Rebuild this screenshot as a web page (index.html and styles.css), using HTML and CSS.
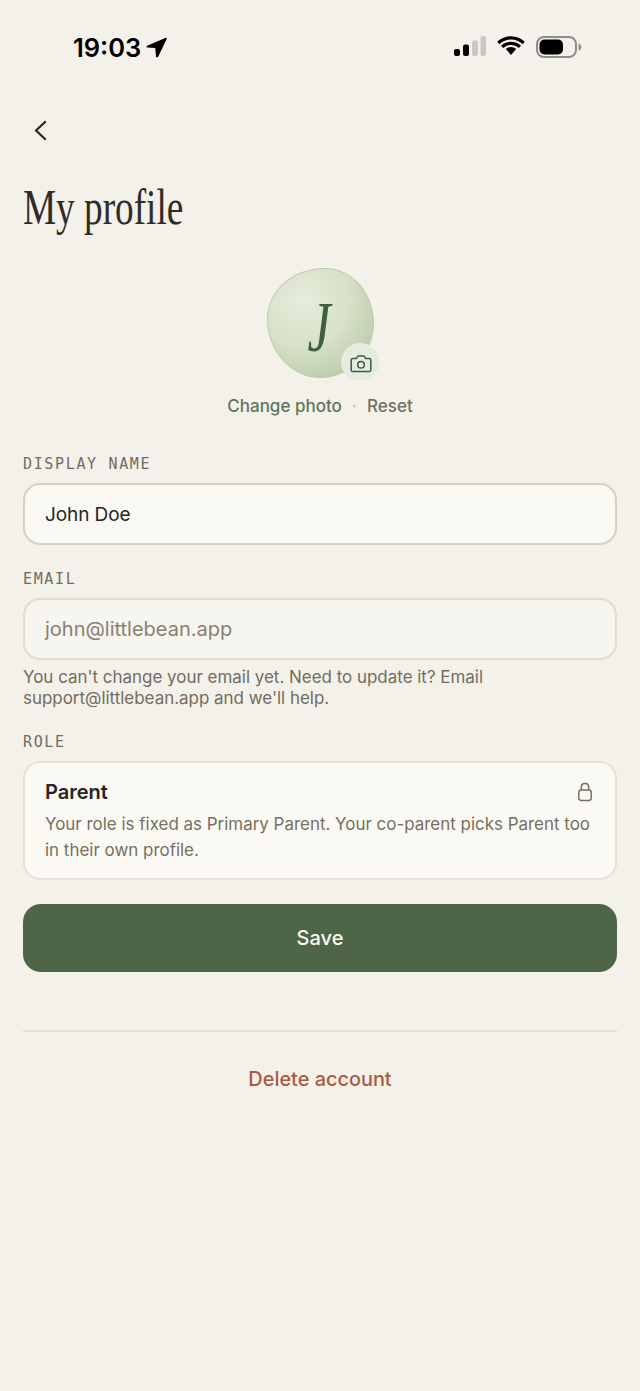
FILE: index.html
```html
<!DOCTYPE html>
<html lang="en">
<head>
    <meta charset="UTF-8">
    <meta name="viewport" content="width=device-width, initial-scale=1.0">
    <title>My profile</title>
    <link rel="stylesheet" href="styles.css">
</head>
<body>

<div class="status-bar">
    <div class="status-time">
        <span>19:03</span>
        <svg class="location-icon" viewBox="0 0 20 20" width="21" height="21">
            <path d="M19 0.800 L1 8.300 Q-0.200 9.400 1.200 10 L8.800 10.400 L9.600 18.800 Q10.600 20 11.600 18.800 L19.800 1.600 Q19.800 0.600 19 0.800 Z" fill="#000"/>
        </svg>
    </div>
    <div class="status-icons">
        <svg viewBox="0 0 32 20" width="32" height="20">
            <rect x="0" y="13" width="6" height="7" rx="2" fill="#000"/>
            <rect x="9" y="8.500" width="6" height="11.500" rx="2" fill="#000"/>
            <rect x="18" y="4.500" width="6" height="15.500" rx="2" fill="#c9c8c3"/>
            <rect x="26.500" y="0" width="5.500" height="20" rx="2" fill="#c9c8c3"/>
        </svg>
        <svg viewBox="0 0 28 20" width="28" height="20">
            <path d="M14 3.500 C9.500 3.500 5.400 5.300 2.400 8.200 L0.200 5.800 C3.800 2.300 8.600 0.200 14 0.200 C19.400 0.200 24.200 2.300 27.800 5.800 L25.600 8.200 C22.600 5.300 18.500 3.500 14 3.500 Z" fill="#000"/>
            <path d="M14 9 C11 9 8.300 10.200 6.300 12.100 L4 9.700 C6.600 7.200 10.100 5.700 14 5.700 C17.900 5.700 21.400 7.200 24 9.700 L21.700 12.100 C19.700 10.200 17 9 14 9 Z" fill="#000"/>
            <path d="M14 11 C16 11 17.900 11.800 19.200 13.100 L14 19 L8.800 13.100 C10.100 11.800 12 11 14 11 Z" fill="#000"/>
        </svg>
        <svg viewBox="0 0 46 22" width="46" height="22">
            <rect x="1" y="1" width="39" height="20" rx="7" fill="none" stroke="#8e8d88" stroke-width="2"/>
            <rect x="3.500" y="3.500" width="23.500" height="15" rx="5" fill="#000"/>
            <path d="M42.500 7.500 C44.500 8 45.500 9.500 45.500 11 C45.500 12.500 44.500 14 42.500 14.500 Z" fill="#8e8d88"/>
        </svg>
    </div>
</div>

<div class="page">
    <button class="back-btn" aria-label="Back">
        <svg viewBox="0 0 14 20" width="14" height="20">
            <path d="M12 2 L3 10.500 L12 19" fill="none" stroke="#2b2a26" stroke-width="2.400" stroke-linecap="round" stroke-linejoin="round"/>
        </svg>
    </button>

    <h1 class="title">My profile</h1>

    <div class="avatar-block">
        <div class="avatar">
            <div class="avatar-blob"><span class="avatar-letter">J</span></div>
            <div class="camera-badge">
                <svg viewBox="0 0 22 20" width="22" height="20">
                    <path d="M2.800 4.600 H6.400 L7.900 2 H14.100 L15.600 4.600 H19.200 Q20.800 4.600 20.800 6.200 V16 Q20.800 17.600 19.200 17.600 H2.800 Q1.200 17.600 1.200 16 V6.200 Q1.200 4.600 2.800 4.600 Z" fill="none" stroke="#3f5a45" stroke-width="1.500" stroke-linejoin="round"/>
                    <circle cx="11" cy="10.800" r="3.300" fill="none" stroke="#3f5a45" stroke-width="1.500"/>
                </svg>
            </div>
        </div>
        <div class="avatar-links">
            <a class="link-change">Change photo</a>
            <span class="link-dot">·</span>
            <a class="link-reset">Reset</a>
        </div>
    </div>

    <label class="field-label">DISPLAY NAME</label>
    <div class="input input-name">John Doe</div>

    <label class="field-label label-email">EMAIL</label>
    <div class="input input-disabled">john@littlebean.app</div>
    <p class="help">You can't change your email yet. Need to update it? Email support@littlebean.app and we'll help.</p>

    <label class="field-label label-role">ROLE</label>
    <div class="role-card">
        <div class="role-head">
            <span class="role-name">Parent</span>
            <svg viewBox="0 0 16 20" width="16" height="20">
                <rect x="1.800" y="8" width="12.400" height="10.500" rx="2.400" fill="none" stroke="#77715f" stroke-width="1.500"/>
                <path d="M4.300 8 V5.200 C4.300 3 6 1.500 8 1.500 C10 1.500 11.700 3 11.700 5.200 V8" fill="none" stroke="#77715f" stroke-width="1.500"/>
            </svg>
        </div>
        <p class="role-text">Your role is fixed as Primary Parent. Your co-parent picks Parent too in their own profile.</p>
    </div>

    <button class="save-btn">Save</button>

    <hr class="divider">

    <a class="delete-link">Delete account</a>
</div>

</body>
</html>
```

FILE: styles.css
```css
* {
    box-sizing: border-box;
}

body {
    margin: 0;
    height: 1391px;
    background-color: #f4f1ea;
    font-family: Inter, "Liberation Sans", sans-serif;
    color: #26251f;
    overflow: hidden;
}

.status-bar {
    height: 119px;
    display: flex;
    justify-content: space-between;
    padding: 33px 58px 0 73px;
}

.status-time {
    display: flex;
    align-items: flex-start;
    gap: 5px;
    font-size: 25.500px;
    font-weight: 600;
    line-height: 30px;
    color: #000;
}

.location-icon {
    margin-top: 4px;
}

.status-icons {
    display: flex;
    align-items: flex-start;
    gap: 11px;
    padding-top: 3px;
}

.page {
    padding: 0 23px;
}

.back-btn {
    display: block;
    margin: 0 0 0 10px;
    padding: 0;
    height: 24px;
    border: 0;
    background: none;
}

.title {
    margin: 36px 0 0;
    font-family: "Liberation Serif", serif;
    font-size: 51px;
    font-weight: 400;
    line-height: 56px;
    color: #2e2c26;
    transform: scaleX(0.73);
    transform-origin: left center;
    white-space: nowrap;
}

.avatar-block {
    display: flex;
    flex-direction: column;
    align-items: center;
    margin-top: 33px;
}

.avatar {
    position: relative;
    width: 107px;
    height: 110px;
}

.avatar-blob {
    display: flex;
    align-items: center;
    justify-content: center;
    width: 107px;
    height: 110px;
    border: 1.500px solid #bccbac;
    border-radius: 54% 46% 50% 50% / 46% 50% 50% 54%;
    background: radial-gradient(circle at 34% 30%, #e7ecdc 0%, #d7e0c8 45%, #b7caa8 85%, #a6bd98 100%);
}

.avatar-letter {
    margin: 7px 2px 0 0;
    font-family: "Liberation Serif", serif;
    font-style: italic;
    font-size: 72px;
    line-height: 70px;
    color: #3f5f42;
    transform: scaleX(0.72);
}

.camera-badge {
    position: absolute;
    right: -5px;
    bottom: -3px;
    width: 38px;
    height: 38px;
    padding: 3px 0 0 3px;
    display: flex;
    align-items: center;
    justify-content: center;
    border-radius: 50%;
    background-color: #e6ebe2;
}

.avatar-links {
    display: flex;
    align-items: center;
    gap: 10px;
    margin-top: 17px;
    font-size: 17px;
    font-weight: 500;
    line-height: 22px;
}

.link-change {
    color: #5f7658;
}

.link-dot {
    color: #c9c6ba;
}

.link-reset {
    color: #75705f;
}

.field-label {
    display: block;
    margin-top: 37px;
    font-family: "DejaVu Sans Mono", monospace;
    font-size: 15px;
    line-height: 20px;
    letter-spacing: 1.650px;
    color: #716c5e;
}

.label-email {
    margin-top: 24px;
}

.label-role {
    margin-top: 23px;
}

.input {
    height: 62px;
    margin-top: 9px;
    padding: 0 20px;
    display: flex;
    align-items: center;
    border: 2px solid #e0dcd0;
    border-radius: 17px;
    background-color: #f7f5f0;
    font-size: 20px;
    color: #86826f;
}

.input-name {
    border-color: #d5d0c2;
    background-color: #f9f8f3;
    font-size: 19px;
    letter-spacing: -0.100px;
    color: #26251f;
}

.help {
    margin: 7px 0 0;
    font-size: 16.950px;
    line-height: 21px;
    color: #716c5e;
}

.role-card {
    height: 119px;
    margin-top: 9px;
    padding: 15px 20px 0;
    border: 2px solid #e5e1d6;
    border-radius: 17px;
    background-color: #faf9f4;
}

.role-head {
    display: flex;
    align-items: center;
    justify-content: space-between;
    height: 28px;
    padding-right: 2px;
    font-size: 20px;
    font-weight: 600;
}

.role-text {
    margin: 5px 0 0;
    font-size: 16.950px;
    line-height: 26px;
    color: #75705f;
}

.save-btn {
    display: block;
    width: 100%;
    height: 68px;
    margin-top: 24px;
    border: 0;
    border-radius: 18px;
    background-color: #4f6548;
    font-family: inherit;
    font-size: 20px;
    font-weight: 500;
    color: #fbfaf5;
}

.divider {
    height: 2px;
    margin: 58px 0 0;
    border: 0;
    background-color: #e4e0d5;
}

.delete-link {
    display: block;
    margin-top: 33px;
    text-align: center;
    font-size: 19.900px;
    font-weight: 500;
    line-height: 28px;
    color: #ab5a3e;
}
```
